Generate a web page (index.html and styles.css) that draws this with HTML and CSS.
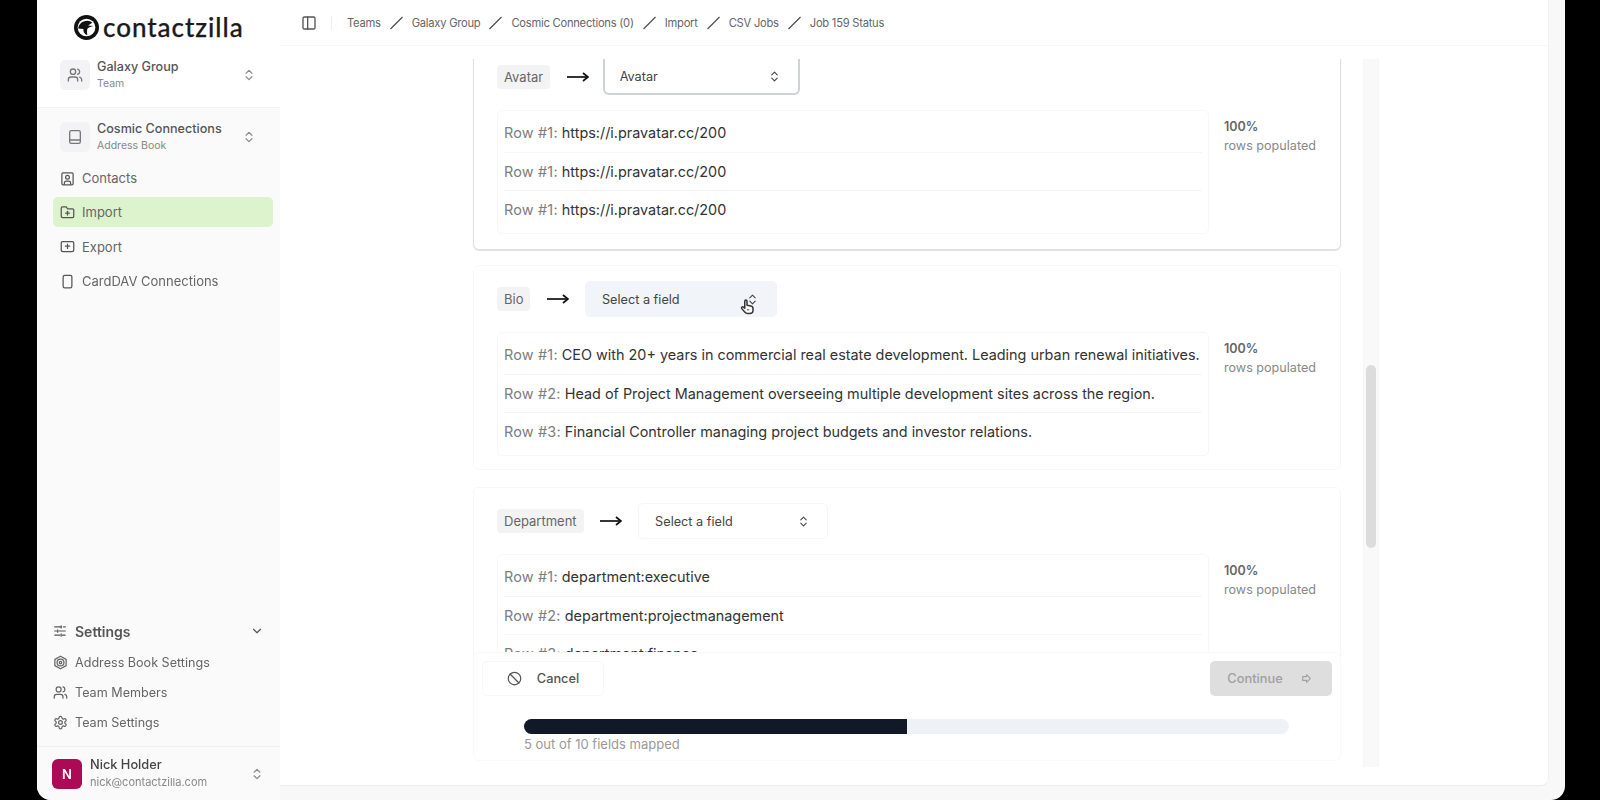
FILE: index.html
```html
<!DOCTYPE html>
<html lang="en">
<head>
<meta charset="utf-8">
<title>Job 159 Status - contactzilla</title>
<link rel="stylesheet" href="styles.css">
</head>
<body>
<svg class="defs" width="0" height="0" aria-hidden="true">
  <symbol id="i-users" viewBox="0 0 24 24"><path d="M16 21v-2a4 4 0 0 0-4-4H6a4 4 0 0 0-4 4v2"/><circle cx="9" cy="7" r="4"/><path d="M22 21v-2a4 4 0 0 0-3-3.87"/><path d="M16 3.13a4 4 0 0 1 0 7.75"/></symbol>
  <symbol id="i-book" viewBox="0 0 24 24"><rect x="4" y="2.5" width="16" height="19" rx="2.5"/><path d="M4 16.5h16"/></symbol>
  <symbol id="i-updown" viewBox="0 0 24 24"><path d="m7 15 5 5 5-5"/><path d="m7 9 5-5 5 5"/></symbol>
  <symbol id="i-contact" viewBox="0 0 24 24"><rect x="3" y="3" width="18" height="19" rx="2"/><circle cx="12" cy="10" r="3"/><path d="M7 21v-2a3 3 0 0 1 3-3h4a3 3 0 0 1 3 3v2"/></symbol>
  <symbol id="i-import" viewBox="0 0 24 24"><path d="M20 20a2 2 0 0 0 2-2V8a2 2 0 0 0-2-2h-8l-2-3H4a2 2 0 0 0-2 2v13a2 2 0 0 0 2 2z"/><path d="M12 10v6"/><path d="M9 13h6"/></symbol>
  <symbol id="i-export" viewBox="0 0 24 24"><path d="M17 20H5a3 3 0 0 1-3-3V6a2 2 0 0 1 2-2h16a2 2 0 0 1 2 2v11a3 3 0 0 1-3 3z"/><path d="M12 8v7"/><path d="M8.500 11.500h7"/></symbol>
  <symbol id="i-phone" viewBox="0 0 24 24"><rect x="5" y="2" width="14" height="20" rx="2.500"/></symbol>
  <symbol id="i-sliders" viewBox="0 0 24 24"><path d="M3 5h11"/><path d="M18 5h3"/><path d="M14 3v4"/><path d="M3 12h3"/><path d="M10 12h11"/><path d="M8 10v4"/><path d="M3 19h9"/><path d="M16 19h5"/><path d="M14 17v4"/></symbol>
  <symbol id="i-down" viewBox="0 0 24 24"><path d="m6 9 6 6 6-6"/></symbol>
  <symbol id="i-hex" viewBox="0 0 24 24"><path d="M12 2 21 7v10l-9 5-9-5V7z"/><circle cx="12" cy="12" r="5.500"/><circle cx="12" cy="12" r="2"/></symbol>
  <symbol id="i-gear" viewBox="0 0 24 24"><path d="M12.220 2h-.44a2 2 0 0 0-2 2v.18a2 2 0 0 1-1 1.730l-.43.25a2 2 0 0 1-2 0l-.15-.08a2 2 0 0 0-2.730.73l-.22.38a2 2 0 0 0 .73 2.730l.15.1a2 2 0 0 1 1 1.720v.51a2 2 0 0 1-1 1.740l-.15.09a2 2 0 0 0-.73 2.730l.22.38a2 2 0 0 0 2.730.73l.15-.08a2 2 0 0 1 2 0l.43.25a2 2 0 0 1 1 1.730V20a2 2 0 0 0 2 2h.44a2 2 0 0 0 2-2v-.18a2 2 0 0 1 1-1.730l.43-.25a2 2 0 0 1 2 0l.15.08a2 2 0 0 0 2.730-.73l.22-.39a2 2 0 0 0-.73-2.730l-.15-.08a2 2 0 0 1-1-1.740v-.5a2 2 0 0 1 1-1.740l.15-.09a2 2 0 0 0 .73-2.730l-.22-.38a2 2 0 0 0-2.730-.73l-.15.08a2 2 0 0 1-2 0l-.43-.25a2 2 0 0 1-1-1.730V4a2 2 0 0 0-2-2z"/><circle cx="12" cy="12" r="3"/></symbol>
  <symbol id="i-panel" viewBox="0 0 24 24"><rect x="3" y="3" width="18" height="18" rx="2"/><path d="M10 3v18"/></symbol>
  <symbol id="i-slash" viewBox="0 0 14 14"><path d="M1 13 13 1"/></symbol>
  <symbol id="i-arrow" viewBox="0 0 22 14"><path d="M0 7h21"/><path d="m16 3 5 4-5 4"/></symbol>
  <symbol id="i-ban" viewBox="0 0 24 24"><circle cx="12" cy="12" r="10"/><path d="m4.900 4.900 14.200 14.200"/></symbol>
  <symbol id="i-next" viewBox="0 0 24 24"><path d="M12 5 19 12 12 19V15.500H5V8.500H12Z"/></symbol>
</svg>

<div class="shell">
  <aside class="sidebar">
    <div class="side-top">
      <div class="logo">
        <svg class="logo-mark" viewBox="0 0 24 24"><circle cx="12" cy="12" r="12" fill="#111"/><circle cx="12" cy="12" r="8.500" fill="#fff"/><path d="M4 13c.5-4 4-7.500 8.500-7.500 2.500 0 4 .8 5 2l-4 2.500 5 .5c-2 .8-4.500 1-5.500 2.500-.6 1.500-.6 3.500-.2 6.500-3-1-4-3.500-3.800-6z" fill="#111"/></svg>
        <span class="logo-text">contactzilla</span>
      </div>
      <div class="switcher">
        <span class="switch-box"><svg class="ic ic-16"><use href="#i-users"/></svg></span>
        <span class="switch-text"><b>Galaxy Group</b><small>Team</small></span>
        <svg class="ic ic-14 updown"><use href="#i-updown"/></svg>
      </div>
    </div>
    <div class="side-body">
      <div class="switcher switcher-book">
        <span class="switch-box"><svg class="ic ic-16"><use href="#i-book"/></svg></span>
        <span class="switch-text"><b>Cosmic Connections</b><small>Address Book</small></span>
        <svg class="ic ic-14 updown"><use href="#i-updown"/></svg>
      </div>
      <nav class="nav">
        <a class="nav-item"><svg class="ic ic-15"><use href="#i-contact"/></svg>Contacts</a>
        <a class="nav-item active"><svg class="ic ic-15"><use href="#i-import"/></svg>Import</a>
        <a class="nav-item"><svg class="ic ic-15"><use href="#i-export"/></svg>Export</a>
        <a class="nav-item"><svg class="ic ic-15"><use href="#i-phone"/></svg>CardDAV Connections</a>
      </nav>
      <div class="settings">
        <div class="settings-head"><svg class="ic ic-14"><use href="#i-sliders"/></svg><span>Settings</span><svg class="ic ic-14 chev"><use href="#i-down"/></svg></div>
        <a class="set-item"><svg class="ic ic-15"><use href="#i-hex"/></svg>Address Book Settings</a>
        <a class="set-item"><svg class="ic ic-15"><use href="#i-users"/></svg>Team Members</a>
        <a class="set-item"><svg class="ic ic-15"><use href="#i-gear"/></svg>Team Settings</a>
      </div>
      <div class="user">
        <span class="avatar">N</span>
        <span class="user-text"><b>Nick Holder</b><small>nick@contactzilla.com</small></span>
        <svg class="ic ic-14 updown"><use href="#i-updown"/></svg>
      </div>
    </div>
  </aside>

  <main class="main">
    <header class="topbar">
      <svg class="ic ic-16 panel"><use href="#i-panel"/></svg>
      <span class="top-sep"></span>
      <ol class="crumbs">
        <li>Teams</li><li class="slash"><svg><use href="#i-slash"/></svg></li>
        <li>Galaxy Group</li><li class="slash"><svg><use href="#i-slash"/></svg></li>
        <li>Cosmic Connections (0)</li><li class="slash"><svg><use href="#i-slash"/></svg></li>
        <li>Import</li><li class="slash"><svg><use href="#i-slash"/></svg></li>
        <li>CSV Jobs</li><li class="slash"><svg><use href="#i-slash"/></svg></li>
        <li>Job 159 Status</li>
      </ol>
    </header>

    <div class="viewport">
      <div class="column">
        <section class="card card-done">
          <div class="map">
            <span class="badge">Avatar</span>
            <svg class="arrow"><use href="#i-arrow"/></svg>
            <div class="select select-done">Avatar<svg class="ic ic-13"><use href="#i-updown"/></svg></div>
          </div>
          <div class="card-body">
            <ul class="rows">
              <li><span>Row #1:</span> https://i.pravatar.cc/200</li>
              <li><span>Row #1:</span> https://i.pravatar.cc/200</li>
              <li><span>Row #1:</span> https://i.pravatar.cc/200</li>
            </ul>
            <div class="stat"><b>100%</b><small>rows populated</small></div>
          </div>
        </section>

        <section class="card">
          <div class="map">
            <span class="badge">Bio</span>
            <svg class="arrow"><use href="#i-arrow"/></svg>
            <div class="select select-hover">Select a field<svg class="ic ic-13"><use href="#i-updown"/></svg>
              <svg class="cursor" viewBox="0 0 24 24"><path d="M9 11V5.500a1.500 1.500 0 0 1 3 0V11l5 .9c2 .4 3 1.500 3 3.300V18c0 2.500-2 4-4.500 4H13c-2 0-3-.8-4-2l-4-4.500c-1-1.500.8-3 2.200-2L9 15z" fill="#fff" stroke="#333" stroke-width="2" stroke-linejoin="round"/><path d="M12 17h3" stroke="#888" stroke-width="2"/></svg>
            </div>
          </div>
          <div class="card-body">
            <ul class="rows">
              <li><span>Row #1:</span> CEO with 20+ years in commercial real estate development. Leading urban renewal initiatives.</li>
              <li><span>Row #2:</span> Head of Project Management overseeing multiple development sites across the region.</li>
              <li><span>Row #3:</span> Financial Controller managing project budgets and investor relations.</li>
            </ul>
            <div class="stat"><b>100%</b><small>rows populated</small></div>
          </div>
        </section>

        <section class="card">
          <div class="map">
            <span class="badge">Department</span>
            <svg class="arrow"><use href="#i-arrow"/></svg>
            <div class="select">Select a field<svg class="ic ic-13"><use href="#i-updown"/></svg></div>
          </div>
          <div class="card-body">
            <ul class="rows">
              <li><span>Row #1:</span> department:executive</li>
              <li><span>Row #2:</span> department:projectmanagement</li>
              <li><span>Row #3:</span> department:finance</li>
            </ul>
            <div class="stat"><b>100%</b><small>rows populated</small></div>
          </div>
        </section>
      </div>

      <div class="track"><div class="thumb"></div></div>

      <div class="footer">
        <div class="actions">
          <button class="btn btn-cancel"><svg class="ic ic-15"><use href="#i-ban"/></svg>Cancel</button>
          <button class="btn btn-next">Continue<svg class="ic ic-13"><use href="#i-next"/></svg></button>
        </div>
        <div class="progress"><div class="progress-fill"></div></div>
        <p class="progress-note">5 out of 10 fields mapped</p>
      </div>
    </div>
  </main>
</div>
</body>
</html>
```
FILE: styles.css
```css
* { box-sizing: border-box; }
html, body { height: 100%; }
body {
  margin: 0;
  background: #000;
  font-family: Inter, "Liberation Sans", sans-serif;
  color: #333;
  overflow: hidden;
  filter: blur(0.4px);
}
.defs { position: absolute; }
.ic { fill: none; stroke: currentColor; stroke-width: 2; stroke-linecap: round; stroke-linejoin: round; flex: none; }
.ic-16 { width: 16px; height: 16px; }
.ic-15 { width: 15px; height: 15px; }
.ic-14 { width: 14px; height: 14px; }
.ic-13 { width: 13px; height: 13px; }

.shell {
  margin-left: 37px;
  width: 1528px;
  height: 800px;
  background: #f8f8f8;
  border-radius: 0 0 14px 14px;
  display: flex;
  overflow: hidden;
}

/* sidebar */
.sidebar { width: 243px; flex: none; display: flex; flex-direction: column; background: #fafafa; }
.side-top { height: 108px; background: #fff; border-bottom: 1px solid #f3f3f3; padding-top: 14px; }
.logo { display: flex; align-items: center; gap: 4px; height: 26px; padding-left: 37px; margin-bottom: 19px; }
.logo-mark { width: 25px; height: 25px; flex: none; }
.logo-text { font-family: Lato, sans-serif; font-size: 26px; line-height: 26px; font-weight: 500; color: #1a1a1a; letter-spacing: .95px; -webkit-text-stroke: .25px #1a1a1a; }
.switcher { display: flex; align-items: center; padding: 0 24px 0 23px; color: #666; }
.switch-box { width: 30px; height: 30px; border-radius: 5px; background: #f3f3f6; display: flex; align-items: center; justify-content: center; flex: none; color: #777; }
.switch-text { display: flex; flex-direction: column; margin-left: 7px; flex: 1; }
.switch-text b { font-size: 12.600px; line-height: 16px; font-weight: 500; color: #555; }
.switch-text small { font-size: 10.500px; line-height: 14px; color: #888; margin-top: 2px; }
.updown { color: #888; }
.side-body { flex: 1; display: flex; flex-direction: column; }
.switcher-book { margin-top: 13px; }
.nav { display: flex; flex-direction: column; padding: 10px 7px 0 16px; }
.nav-item { height: 30px; margin-bottom: 4.400px; display: flex; align-items: center; gap: 7px; padding-left: 7px; border-radius: 5px; font-size: 13px; color: #666; }
.nav-item svg { color: #555; }
.nav-item.active { background: #dcf3cd; }
.settings { margin-top: auto; padding: 0 16px 0 16px; }
.settings-head { display: flex; align-items: center; height: 30px; margin-bottom: 1px; color: #555; }
.settings-head span { font-size: 14px; font-weight: 600; margin-left: 8px; flex: 1; }
.set-item { height: 30px; display: flex; align-items: center; gap: 7px; font-size: 12.600px; color: #666; }
.user { display: flex; align-items: center; margin-top: 9px; padding: 12px 16px 12px 15px; border-top: 1px solid #f1f1f1; height: 54px; }
.avatar { width: 30px; height: 30px; border-radius: 6px; background: #ad0a55; color: #fff; font-size: 13px; font-weight: 600; display: flex; align-items: center; justify-content: center; flex: none; }
.user-text { display: flex; flex-direction: column; margin-left: 8px; flex: 1; }
.user-text b { font-size: 12.800px; line-height: 16px; font-weight: 500; color: #444; }
.user-text small { font-size: 11px; line-height: 15px; color: #888; margin-top: 2px; }

/* main */
.main { flex: 1; margin: 0 16px 14px 0; background: #fff; border-right: 1px solid #f1f1f1; border-bottom: 1px solid #ececec; border-radius: 0 0 8px 0; display: flex; flex-direction: column; min-width: 0; }
.topbar { height: 46px; flex: none; display: flex; align-items: center; padding-left: 21px; border-bottom: 1px solid #f8f8f8; color: #555; }
.top-sep { width: 1px; height: 14px; background: #eee; margin: 0 15px 0 14px; }
.crumbs { list-style: none; display: flex; align-items: center; gap: 8px; margin: 0; padding: 0; font-size: 11.200px; letter-spacing: -.25px; color: #666; }
.slash { display: flex; }
.slash svg { width: 15px; height: 14px; fill: none; stroke: #444; stroke-width: 1.100; }

.viewport { position: relative; flex: 1; margin-top: 13px; display: flex; overflow: hidden; min-height: 0; }
.column { width: 868px; margin-left: 193px; display: flex; flex-direction: column; gap: 17px; flex: none; }
.track { width: 16px; margin-left: 22px; height: 708px; background: #f9f9f9; border: solid #f5f5f5; border-width: 0 1px; padding: 306px 2px 0; flex: none; }
.thumb { width: 10px; height: 183px; background: #dcdcdc; border-radius: 5px; }

/* cards */
.card { flex: none; height: 205px; border: 1px solid #f7f7f7; border-radius: 6px; padding: 15px 23px 15px; background: #fff; }
.card-done { margin: -16px 0 -2px; height: 207px; border-color: #e0e0e0; box-shadow: 0 1px 1px #e2e2e2; }
.map { display: flex; align-items: center; height: 36px; }
.badge { font-size: 13px; line-height: 24px; padding: 0 7px; background: #f3f3f4; border-radius: 4px; color: #666; }
.arrow { width: 22px; height: 14px; margin: 0 16px 0 16.500px; fill: none; stroke: #111; stroke-width: 1.700; flex: none; }
.select { width: 190px; height: 36px; padding: 0 17px 0 16px; border: 1px solid #f6f6f6; border-radius: 5px; display: flex; align-items: center; justify-content: space-between; font-size: 12.700px; color: #444; position: relative; background: #fff; }
.select-done { width: 197px; margin-left: -2px; border: 2px solid #cfd3d6; border-top: 0; border-radius: 0 0 6px 6px; padding-left: 15px; }
.select-hover { width: 192px; background: #f1f5f9; border-color: #f1f5f9; }
.cursor { position: absolute; left: 152px; top: 14px; width: 18px; height: 20px; }
.card-body { display: flex; margin-top: 15px; }
.rows { list-style: none; width: 712px; height: 124px; margin: 0; padding: 3px 6px; border: 1px solid #f7f7f7; border-radius: 5px; font-size: 14.400px; color: #333; flex: none; }
.rows li { height: 38.700px; line-height: 38px; border-bottom: 1px solid #f5f5f5; white-space: nowrap; }
.rows li:last-child { border-bottom: 0; }
.rows span { color: #7d7d7d; letter-spacing: .2px; }
.stat { margin: 9px 0 0 15px; display: flex; flex-direction: column; }
.stat b { font-size: 12.500px; line-height: 16px; font-weight: 600; color: #666; }
.stat small { font-size: 12.600px; line-height: 16px; margin-top: 3px; color: #888; }

/* footer overlay */
.footer { position: absolute; left: 193px; top: 593px; width: 868px; height: 109px; background: #fff; border: 1px solid #f9f9f9; border-radius: 6px; padding: 8px 8px 0; }
.actions { display: flex; justify-content: space-between; }
.btn { height: 35px; width: 122px; border-radius: 5px; font: 500 12.800px Inter, sans-serif; display: flex; align-items: center; justify-content: center; border: 0; }
.btn-cancel { background: #fff; border: 1px solid #f7f7f7; color: #555; gap: 15px; padding-right: 6px; }
.btn-next { background: #dedede; color: #a0a0a0; gap: 17px; padding-left: 4px; }
.progress { margin: 23px 43px 0 42px; height: 15px; background: #eef2f7; border-radius: 8px; overflow: hidden; }
.progress-fill { width: 50%; height: 100%; background: #111827; }
.progress-note { margin: 2px 0 0 42px; font-size: 13px; line-height: 16px; color: #999; }
```
